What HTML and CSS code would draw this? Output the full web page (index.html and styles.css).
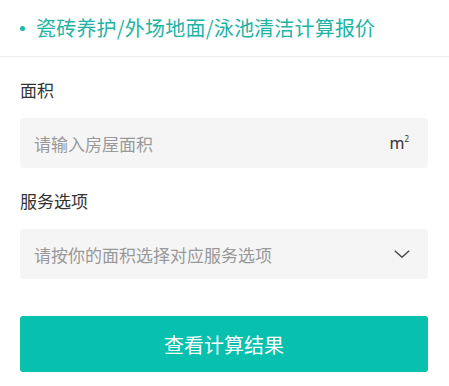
FILE: index.html
```html
<!DOCTYPE html>
<html lang="zh-CN">
<head>
<meta charset="utf-8">
<link rel="stylesheet" href="styles.css">
</head>
<body>
<div class="page">
  <header class="head">
    <span class="dot"></span>
    <h1 class="title">瓷砖养护/外场地面/泳池清洁计算报价</h1>
  </header>
  <form class="form">
    <div class="group">
      <label class="label">面积</label>
      <div class="field">
        <span class="placeholder">请输入房屋面积</span>
        <span class="unit">m<sup class="sq">2</sup></span>
      </div>
    </div>
    <div class="group">
      <label class="label">服务选项</label>
      <div class="field">
        <span class="placeholder">请按你的面积选择对应服务选项</span>
        <svg class="chev" width="16" height="8" viewBox="0 0 16 8"><path d="M0.8 0.8 L8 7.2 L15.2 0.8" fill="none" stroke="#444" stroke-width="1.4"/></svg>
      </div>
    </div>
    <button type="button" class="btn">查看计算结果</button>
  </form>
</div>
</body>
</html>
```
FILE: styles.css
```css
* { box-sizing: border-box; }
html, body { margin: 0; padding: 0; background: #fff; }
body { font-family: "Noto Sans CJK SC", "Noto Sans", sans-serif; color: #333; }
.page { width: 449px; }
.head {
  height: 57px;
  border-bottom: 1px solid #eeeeee;
  display: flex;
  align-items: center;
  padding-left: 20px;
  gap: 11px;
}
.dot { width: 5px; height: 5px; border-radius: 50%; background: #1db5a5; flex: none; margin-top: 1px; }
.title { margin: 0; font-size: 20px; font-weight: 400; color: #22b3a4; line-height: 28px; letter-spacing: 0.2px; }
.form { padding: 0 21px 0 20px; display: flex; flex-direction: column; }
.group { display: flex; flex-direction: column; gap: 16px; margin-top: 21px; }
.label { font-size: 17px; line-height: 24px; color: #333; }
.field {
  height: 50px;
  background: #f5f5f5;
  border-radius: 3px;
  display: flex;
  align-items: center;
  justify-content: space-between;
  padding: 0 18px 0 14px;
}
.placeholder { font-size: 17px; color: #999; }
.unit { font-size: 16px; color: #333; font-family: "Noto Sans", sans-serif; margin-right: 1px; }
.sq { font-size: 8px; vertical-align: 7px; margin-left: 0; }
.chev { display: block; }
.btn {
  margin-top: 37px;
  height: 56px;
  border: none;
  border-radius: 3px;
  background: #07c0ad;
  color: #fff;
  font-family: inherit;
  font-size: 20px;
  padding: 0;
}
```
